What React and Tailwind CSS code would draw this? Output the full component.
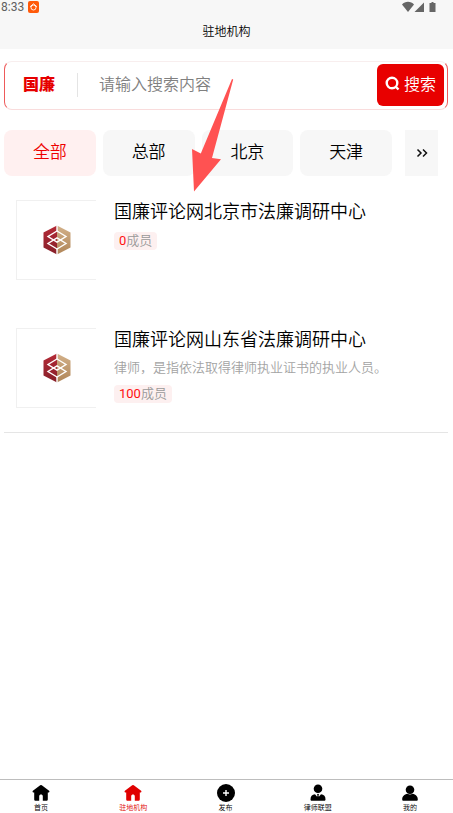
import React from "react";

const tabs = ["全部", "总部", "北京", "天津"];

const orgs = [
  { name: "国廉评论网北京市法廉调研中心", desc: "", members: 0 },
  {
    name: "国廉评论网山东省法廉调研中心",
    desc: "律师，是指依法取得律师执业证书的执业人员。",
    members: 100,
  },
];

function HomeIcon() {
  return (
    <svg viewBox="0 0 18 18" className="h-[18px] w-[18px]" fill="currentColor" aria-hidden="true">
      <path d="M8.200 1.300.9 6.800c-.6.5-.4 1.600.4 1.600h.9v6.800c0 1 .6 1.600 1.500 1.600h3.500V12.200c0-1 .8-1.700 1.800-1.700s1.800.7 1.800 1.700v4.600h3.500c.9 0 1.500-.6 1.500-1.600V8.400h.9c.8 0 1-1.100.4-1.600L9.800 1.300a1.300 1.300 0 0 0-1.600 0z" />
    </svg>
  );
}

function PlusIcon() {
  return (
    <svg viewBox="0 0 18 18" className="h-[18px] w-[18px]" aria-hidden="true">
      <circle cx="9" cy="9" r="9" fill="currentColor" />
      <path d="M9 6v6M6 9h6" stroke="#fff" strokeWidth="1.400" />
    </svg>
  );
}

function LawyerIcon() {
  return (
    <svg viewBox="0 0 18 18" className="h-[18px] w-[18px]" fill="currentColor" aria-hidden="true">
      <circle cx="9" cy="4.800" r="4.300" />
      <path d="M1.500 15.500c0-3.500 1.500-4.800 4.500-5.300l3 3.600 3-3.600c3 .5 4.500 1.800 4.500 5.300 0 .8-.5 1.300-1.300 1.300H2.800c-.8 0-1.300-.5-1.300-1.300z" />
      <path d="m8 10.300 1-.5 1 .5-.5 1.200.6 2L9 15l-1.100-1.500.6-2z" />
    </svg>
  );
}

function UserIcon() {
  return (
    <svg viewBox="0 0 18 18" className="h-[18px] w-[18px]" fill="currentColor" aria-hidden="true">
      <circle cx="9" cy="5.700" r="4.300" />
      <path d="M1.200 15.500c0-3.500 2-5 5.300-5.800 1.500.9 3.500.9 5 0 3.300.8 5.300 2.300 5.300 5.800 0 .8-.5 1.300-1.300 1.300h-13c-.8 0-1.300-.5-1.300-1.300z" />
    </svg>
  );
}

const navItems = [
  { label: "首页", Icon: HomeIcon },
  { label: "驻地机构", Icon: HomeIcon, active: true },
  { label: "发布", Icon: PlusIcon },
  { label: "律师联盟", Icon: LawyerIcon },
  { label: "我的", Icon: UserIcon },
];

function StatusBar() {
  return (
    <div className="flex h-[14px] items-center justify-between pl-px pr-[17px] text-[#5f5f5f]">
      <div className="flex items-center gap-1">
        <span className="text-[12px] font-normal leading-[14px]">8:33</span>
        <svg viewBox="0 0 11 12" className="h-3 w-[11px]" aria-hidden="true">
          <rect width="11" height="12" rx="2" fill="#ff5a0a" />
          <path d="M2 5.800 5.500 2.800 9 5.800" fill="none" stroke="#fff" strokeWidth=".9" />
          <circle cx="5.500" cy="6.500" r="2.500" fill="none" stroke="#fff" strokeWidth=".9" />
        </svg>
      </div>
      <svg viewBox="0 0 34 12" className="h-3 w-[34px]" fill="#666" aria-hidden="true">
        <path d="M0 3.500C3-.3 9-.3 12 3.500L6 11z" />
        <path d="M22 1.500V11h-9.500z" />
        <path d="M27.500 2h2V1h2v1h2v9h-6z" />
      </svg>
    </div>
  );
}

// Hexagon emblem, red half and gold half
function Emblem() {
  return (
    <svg viewBox="0 0 28 30" className="h-[30px] w-7" aria-hidden="true">
      <defs>
        <linearGradient id="emblemRed" x1="0" y1="0" x2="0" y2="1">
          <stop offset="0" stopColor="#b52a37" />
          <stop offset="1" stopColor="#86202a" />
        </linearGradient>
        <linearGradient id="emblemGold" x1="0" y1="0" x2="0" y2="1">
          <stop offset="0" stopColor="#d3b18a" />
          <stop offset="1" stopColor="#b08558" />
        </linearGradient>
      </defs>
      <path d="M14 .5V29.500L.5 22.500V7.500z" fill="url(#emblemRed)" />
      <path d="M14 .5V29.500L27.500 22.500V7.500z" fill="url(#emblemGold)" />
      <path d="M14 0v6M14 24v6" stroke="#fff" strokeWidth="1.400" />
      <g fill="none" stroke="#fff" strokeWidth="1.400">
        <path d="M14 6 23 11.500 14 17.200 5 11.500z" />
        <path d="M14 12.800 23 18.500 14 24 5 18.500z" />
      </g>
    </svg>
  );
}

function SearchBar() {
  return (
    <form
      className="flex h-[49px] items-center rounded-lg border border-b-[#f9dcdc] border-t-[#f8eeee] border-x-[#ee5a5a] pb-px pl-[18px] pr-[3px]"
      onSubmit={(e) => e.preventDefault()}
    >
      <span className="text-[16px] font-black text-[#e60000]">国廉</span>
      <span className="ml-[22px] h-6 w-px bg-[#e4e4e4]" />
      <input
        type="text"
        aria-label="搜索"
        placeholder="请输入搜索内容"
        className="ml-[21px] min-w-0 flex-1 bg-transparent text-[16px] outline-none placeholder:text-[#808080]"
      />
      <button
        type="submit"
        className="flex h-[42px] w-[67px] shrink-0 items-center justify-center gap-1 rounded-md bg-[#e80000] text-[16px] text-white"
      >
        <svg viewBox="0 0 15 15" className="mb-1 h-[15px] w-[15px]" fill="none" stroke="#fff" strokeWidth="2.400" aria-hidden="true">
          <circle cx="7" cy="7" r="5.300" />
          <path d="m10.500 10.500 3 3" />
        </svg>
        搜索
      </button>
    </form>
  );
}

function OrgItem({ org }) {
  return (
    <li className="flex min-h-20 gap-[18px] pl-3">
      <div className="flex h-20 w-20 shrink-0 items-center justify-center border-y border-l border-[#f0f0f0]">
        <Emblem />
      </div>
      <div className="flex min-w-0 flex-col items-start">
        <h2 className="text-[18px] leading-6 text-black">{org.name}</h2>
        {org.desc && <p className="mt-[7px] text-[13px] leading-[18px] text-[#a3a3a3]">{org.desc}</p>}
        <span className="mt-2 rounded bg-[#fdf0f0] px-[5px] text-[13px] leading-[18px] text-[#999]">
          <span className="font-normal text-[#ff1010]">{org.members}</span>成员
        </span>
      </div>
    </li>
  );
}

function BottomNav() {
  return (
    <nav className="flex justify-between border-t border-[#bdbdbd] bg-white pl-[18px] pr-5 pt-1">
      {navItems.map(({ label, Icon, active }) => (
        <a
          key={label}
          href="#"
          className={`flex w-[46px] flex-col items-center ${active ? "text-[#e00000]" : "text-black"}`}
        >
          <Icon />
          <span className="whitespace-nowrap pt-px text-[7px] leading-[10px]">{label}</span>
        </a>
      ))}
    </nav>
  );
}

export default function App() {
  return (
    <div className="relative flex min-h-screen flex-col bg-white font-[Roboto,'Noto_Sans_CJK_SC',sans-serif] font-[350]">
      <header className="bg-[#f7f7f7]">
        <StatusBar />
        <h1 className="pb-2 pt-[9px] text-center text-[12px] leading-[18px] text-black">驻地机构</h1>
      </header>

      <main className="flex-1 pl-1 pr-[5px] pt-3">
        <SearchBar />

        <div className="mt-5 flex pr-[10px]">
          <div className="flex flex-1 gap-[7px]">
            {tabs.map((tab, i) => (
              <button
                key={tab}
                type="button"
                className={`h-[46px] flex-1 rounded-lg text-[17px] ${
                  i === 0 ? "bg-[#fff0f0] text-[#ee0000]" : "bg-[#f7f7f7] text-black"
                }`}
              >
                {tab}
              </button>
            ))}
          </div>
          <button
            type="button"
            aria-label="更多"
            className="ml-[13px] flex h-[46px] w-[33px] items-center justify-center bg-[#f7f7f7]"
          >
            <svg viewBox="0 0 12 10" className="h-[10px] w-3" fill="none" stroke="#111" strokeWidth="1.500" aria-hidden="true">
              <path d="m1.500 1.500 3.500 3.500-3.500 3.500M7 1.500 10.500 5 7 8.500" />
            </svg>
          </button>
        </div>

        <ul className="mt-6 flex flex-col gap-12 border-b border-[#e5e5e5] pb-6">
          {orgs.map((org) => (
            <OrgItem key={org.name} org={org} />
          ))}
        </ul>
      </main>

      <BottomNav />

      {/* Pointer arrow laid over the page */}
      <svg
        viewBox="0 0 44 114"
        className="pointer-events-none absolute left-[190px] top-[78px] h-[114px] w-11"
        fill="#ff5252"
        aria-hidden="true"
      >
        <path d="M42 1 43.200 1.500 22 80 31 81.300 4 113.500 2 71 10.800 75.500z" />
      </svg>
    </div>
  );
}
